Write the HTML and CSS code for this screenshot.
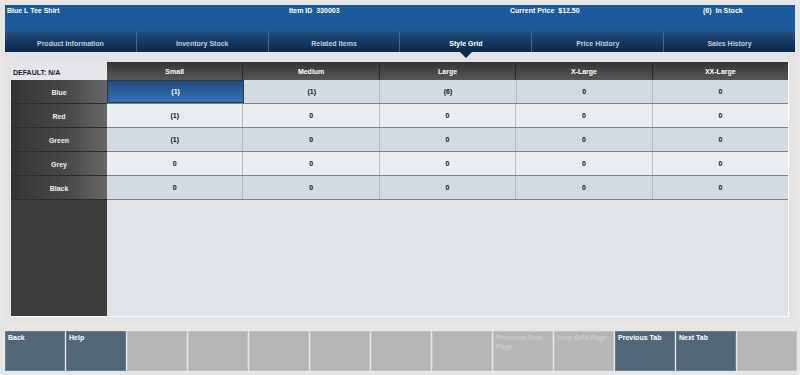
FILE: index.html
```html
<!DOCTYPE html>
<html>
<head>
<meta charset="utf-8">
<link rel="stylesheet" href="styles.css">
</head>
<body>
<div class="app">
  <div class="header">
    <span>Blue L Tee Shirt</span>
    <span>Item ID&nbsp;&nbsp;330003</span>
    <span>Current Price&nbsp;&nbsp;$12.50</span>
    <span>(6)&nbsp;&nbsp;In Stock</span>
  </div>
  <div class="tabs">
    <div class="tab">Product Information</div>
    <div class="tab">Inventory Stock</div>
    <div class="tab">Related Items</div>
    <div class="tab active">Style Grid</div>
    <div class="tab">Price History</div>
    <div class="tab">Sales History</div>
  </div>
  <div class="content">
    <div class="panel">
      <div class="side">
        <div class="corner">DEFAULT: N/A</div>
        <div class="label">Blue</div>
        <div class="label">Red</div>
        <div class="label">Green</div>
        <div class="label">Grey</div>
        <div class="label">Black</div>
      </div>
      <div class="grid">
        <div class="hrow">
          <div class="hcell">Small</div>
          <div class="hcell">Medium</div>
          <div class="hcell">Large</div>
          <div class="hcell">X-Large</div>
          <div class="hcell">XX-Large</div>
        </div>
        <div class="row odd">
          <div class="cell selected">(1)</div>
          <div class="cell">(1)</div>
          <div class="cell">(6)</div>
          <div class="cell">0</div>
          <div class="cell">0</div>
        </div>
        <div class="row even">
          <div class="cell">(1)</div>
          <div class="cell">0</div>
          <div class="cell">0</div>
          <div class="cell">0</div>
          <div class="cell">0</div>
        </div>
        <div class="row odd">
          <div class="cell">(1)</div>
          <div class="cell">0</div>
          <div class="cell">0</div>
          <div class="cell">0</div>
          <div class="cell">0</div>
        </div>
        <div class="row even">
          <div class="cell">0</div>
          <div class="cell">0</div>
          <div class="cell">0</div>
          <div class="cell">0</div>
          <div class="cell">0</div>
        </div>
        <div class="row odd">
          <div class="cell">0</div>
          <div class="cell">0</div>
          <div class="cell">0</div>
          <div class="cell">0</div>
          <div class="cell">0</div>
        </div>
      </div>
    </div>
  </div>
  <div class="buttons">
    <div class="btn on">Back</div>
    <div class="btn on">Help</div>
    <div class="btn"></div>
    <div class="btn"></div>
    <div class="btn"></div>
    <div class="btn"></div>
    <div class="btn"></div>
    <div class="btn"></div>
    <div class="btn off">Previous Grid Page</div>
    <div class="btn off">Next Grid Page</div>
    <div class="btn on">Previous Tab</div>
    <div class="btn on">Next Tab</div>
    <div class="btn"></div>
  </div>
</div>
</body>
</html>
```
FILE: styles.css
```css
html, body {
  margin: 0;
  padding: 0;
  background: #e6e6e6;
}
body {
  font-family: "Liberation Sans", Arial, sans-serif;
  font-weight: bold;
  font-size: 7px;
  line-height: 9px;
}
.app {
  padding: 5px 5px 0 5px;
  width: 790px;
}
.header {
  height: 26px;
  box-sizing: border-box;
  background: #1d5a9c;
  color: #fff;
  padding: 1px 0 0 2px;
  display: grid;
  grid-template-columns: 282px 221px 193px 1fr;
}
.tabs {
  display: flex;
  height: 21px;
}
.tab {
  flex: 1;
  box-sizing: border-box;
  background: linear-gradient(#26537f, #13385f 55%, #0b2a4c);
  color: #c3ccd7;
  text-align: center;
  padding-top: 8px;
  border-left: 1px solid #3b6792;
  position: relative;
}
.tab:first-child {
  border-left: none;
}
.tab.active {
  color: #fff;
}
.tab.active::after {
  content: "";
  position: absolute;
  left: 50%;
  top: 21px;
  margin-left: -6px;
  border-left: 6px solid transparent;
  border-right: 6px solid transparent;
  border-top: 6px solid #0b2a4c;
}
.content {
  background: #e1e3e6;
  padding: 10px 6px 6px 6px;
}
.panel {
  display: flex;
  height: 255px;
  box-sizing: border-box;
  background: #dfe2e6;
  border-right: 1px solid #fff;
  border-bottom: 1px solid #fff;
}
.side {
  width: 96px;
  background: #3c3c3c;
  display: flex;
  flex-direction: column;
}
.corner {
  height: 18px;
  background: #e4e6ea;
  color: #222;
  padding: 6px 0 0 2px;
  box-sizing: border-box;
  font-weight: bold;
}
.label {
  height: 24px;
  box-sizing: border-box;
  background: linear-gradient(90deg, #333 0%, #4a4a4a 60%, #666 100%);
  border-bottom: 1px solid #2b2b2b;
  color: #f0f0f0;
  text-align: center;
  padding-top: 8px;
}
.grid {
  flex: 1;
  display: flex;
  flex-direction: column;
}
.hrow {
  display: flex;
  height: 18px;
  background: linear-gradient(#333, #4a4a4a 60%, #575757);
}
.hcell {
  flex: 1;
  color: #fff;
  text-align: center;
  padding-top: 5px;
  box-sizing: border-box;
  border-right: 1px solid #2a2a2a;
}
.hcell:last-child {
  border-right: none;
}
.row {
  display: flex;
  height: 24px;
  box-sizing: border-box;
  border-bottom: 1px solid #7c8186;
}
.row.odd {
  background: #d3dae1;
}
.row.even {
  background: #e9ecf0;
}
.cell {
  flex: 1;
  color: #111;
  text-align: center;
  padding-top: 7px;
  box-sizing: border-box;
  border-right: 1px solid #b3b9bf;
}
.cell:last-child {
  border-right: none;
}
.cell.selected {
  background: linear-gradient(#204b82, #3272b6);
  border: 1px solid #333;
  color: #fff;
  padding-top: 6px;
}
.buttons {
  display: grid;
  grid-template-columns: repeat(13, 60px);
  column-gap: 1px;
  margin-top: 8px;
  height: 40px;
}
.btn {
  background: #b5b5b5;
  border: 1px solid #c3c3c3;
  box-sizing: border-box;
  padding: 1px 2px;
  color: #fff;
}
.btn.on {
  background: #52667a;
  border-color: #6a7d90;
}
.btn.off {
  color: #cbcbcb;
}
```
